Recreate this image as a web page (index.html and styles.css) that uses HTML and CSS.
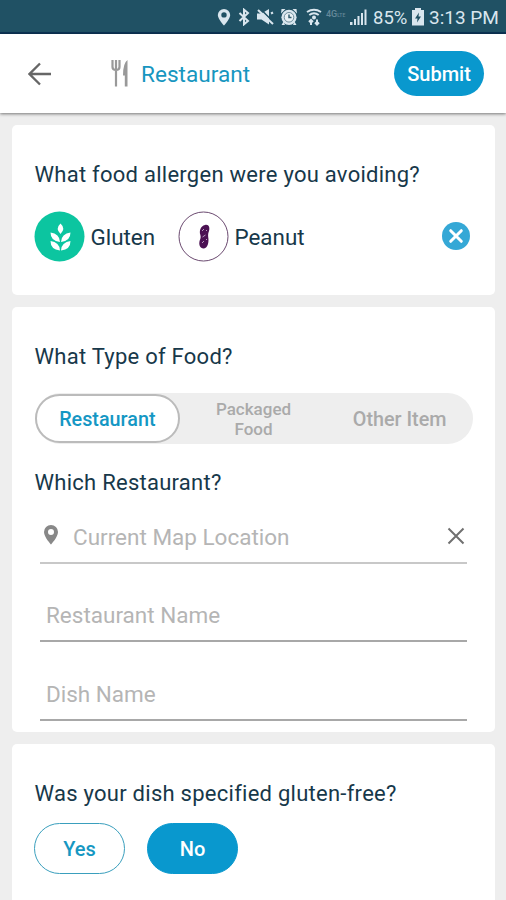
FILE: index.html
```
<!DOCTYPE html>
<html lang="en">
<head>
	<meta charset="utf-8">
	<meta name="viewport" content="width=device-width, initial-scale=1">
	<title>Restaurant</title>
	<link rel="stylesheet" href="styles.css">
</head>

<body>
	<div class="status-bar">
		<svg class="status-pin" width="14" height="18" viewBox="0 0 14 18"><path fill-rule="evenodd" d="M7 1a6.200 6.200 0 0 0-6.200 6c0 4 6.200 10.500 6.200 10.500S13.200 11 13.200 7A6.200 6.200 0 0 0 7 1zm0 3.200a2.700 2.700 0 1 1 0 5.400 2.700 2.700 0 0 1 0-5.400z"/></svg>
		<svg class="status-bluetooth" width="12" height="18" viewBox="0 0 12 18"><path class="line" d="M1.500 5l8.500 8L6 16.300V1.700L10 5l-8.500 8"/></svg>
		<svg class="status-mute" width="17" height="18" viewBox="0 0 17 18"><path d="M0 5.500h4.500L12 1v15.500l-7.500-5H0z"/><path class="cut" d="M3 .5l14 14"/><path class="line" d="M1 2l15 14"/><path class="line" d="M14 5.500l2-1"/></svg>
		<svg class="status-alarm" width="18" height="18" viewBox="0 0 18 18"><path d="M1.500 1h4L1 5.500zM16.500 1h-4L17 5.500zM3.500 13.500l-2 3.500H5zM14.500 13.500l2 3.500H13z"/><circle cx="9" cy="9.300" r="7.600"/><circle class="dial" cx="9" cy="9.300" r="4.800"/><path class="thin" d="M9 6.500v3h2.500"/></svg>
		<svg class="status-wifi" width="16" height="18" viewBox="0 0 16 18"><path class="line" d="M1 4q7-4.500 14 0M3.300 7q4.700-3.500 9.400 0"/><circle cx="8" cy="9.500" r="2"/><path class="line" d="M5 17v-5M3 14l2-2 2 2M11 11.500v5M9 14.500l2 2 2-2"/></svg>
		<span class="network">4G<small>LTE</small></span>
		<svg class="status-signal" width="17" height="18" viewBox="0 0 17 18"><path d="M0 14h2.500v3H0zM4 11h2v6H4zM7.500 8h2v9h-2zM11 5h2v12h-2zM14.500 1.500h2V17h-2z"/></svg>
		<span class="percent">85%</span>
		<svg class="status-battery" width="12" height="18" viewBox="0 0 12 18"><path d="M3 0h6v2h3v15.500H0V2h3z"/><path class="bolt" d="M7 4.500L3 10.500h2.500L5 14.500l4-6H6.500z"/></svg>
		<span class="time">3:13 PM</span>
	</div>

	<header class="header">
		<svg class="back" width="24" height="24" viewBox="0 0 24 24"><path d="M23 12H2M12 1.500L1.500 12 12 22.500"/></svg>
		<svg class="cutlery" width="18" height="27" viewBox="0 0 18 27"><path class="fork" d="M1.500 0v7q0 3 3.500 3t3.500-3V0M5 0v26.500"/><path class="knife" d="M16.500 0v26.500h-2.700V15.500H12Q12 3 16.500 0z"/></svg>
		<h1 class="title">Restaurant</h1>
		<button type="button" class="submit">Submit</button>
	</header>

	<main class="content">
		<section class="card allergen-card">
			<h2 class="question">What food allergen were you avoiding?</h2>
			<div class="allergens">
				<svg width="51" height="51" viewBox="0 0 51 51"><circle class="gluten-bg" cx="25.500" cy="25.500" r="25"/><g class="wheat"><path d="M26.500 12.500q5.500 5 0 10.500-5.500-5.500 0-10.500zM16.500 21.500q9 1 9.500 9.500-9.500-1-9.500-9.500zM36.500 21.500Q27.500 22.500 27 31q9.500-1 9.500-9.500zM16.500 30q9 1 9.500 9.500-9.500-1-9.500-9.500zM36.500 30q-9 1-9.500 9.500 9.500-1 9.500-9.500z"/></g></svg>
				<span class="allergen">Gluten</span>
				<svg width="51" height="51" viewBox="0 0 51 51"><circle class="peanut-bg" cx="25.500" cy="25.500" r="24.500"/><path class="peanut" d="M27 14c4-1 5 3 4 6-.8 2.500-1 3-.8 6 1 5-.5 11-4.200 11.500-4 .3-5.500-4-4.300-8 1-2.500 1.200-3 .7-5.500C21 20 22.500 15 27 14z"/><path class="peanut-line" d="M24 20l2-2M24.500 26l3-2M24 32l2-2M28 19l1 1M28 29l1-1"/></svg>
				<span class="allergen">Peanut</span>
				<svg class="clear" width="28" height="28" viewBox="0 0 28 28"><circle cx="14" cy="14" r="14"/><path d="M8.700 8.700l10.600 10.600M19.300 8.700L8.700 19.300"/></svg>
			</div>
		</section>

		<section class="card food-card">
			<h2 class="question">What Type of Food?</h2>
			<div class="tabs">
				<div class="tab active">Restaurant</div>
				<div class="tab small">Packaged<br>Food</div>
				<div class="tab">Other Item</div>
			</div>
			<h2 class="question q-which">Which Restaurant?</h2>
			<div class="field location">
				<svg class="pin" width="14" height="20" viewBox="0 0 14 20"><path fill-rule="evenodd" d="M7 0a7 7 0 0 0-7 7c0 5 7 12.500 7 12.500S14 12 14 7a7 7 0 0 0-7-7zm0 4a3 3 0 1 1 0 6 3 3 0 0 1 0-6z"/></svg>
				<span class="hint map-hint">Current Map Location</span>
				<svg class="remove" width="18" height="18" viewBox="0 0 18 18"><path d="M1.500 1.500l15 15M16.500 1.500l-15 15"/></svg>
			</div>
			<div class="field name"><span class="hint">Restaurant Name</span></div>
			<div class="field"><span class="hint">Dish Name</span></div>
		</section>

		<section class="card dish-card">
			<h2 class="question">Was your dish specified gluten-free?</h2>
			<div class="answers">
				<button type="button" class="answer">Yes</button>
				<button type="button" class="answer selected">No</button>
			</div>
		</section>
	</main>
</body>
</html>
```
FILE: styles.css
```
* {
	box-sizing: border-box;
}

body {
	margin: 0;
	height: 900px;
	overflow: hidden;
	background: #eee;
	font-family: Roboto, sans-serif;
	color: #17384a;
}

h1, h2 {
	margin: 0;
	font-weight: 400;
	white-space: nowrap;
}

svg {
	display: block;
	flex: none;
}

button {
	padding: 0;
	border: 0;
	font-family: inherit;
}

/* status bar */
.status-bar {
	display: flex;
	align-items: center;
	height: 34px;
	padding: 2px 0 0 217px;
	background: #205164;
	border-bottom: 2px solid #0d3354;
	color: #d9e6ee;
	fill: #d9e6ee;
	white-space: nowrap;
}
.status-bar .line {
	fill: none;
	stroke: #d9e6ee;
	stroke-width: 2;
}
.status-bar .cut {
	stroke: #205164;
	stroke-width: 1.5;
}
.status-bar .dial {
	fill: #e8f0f4;
	stroke: #6d8d9b;
	stroke-width: 1;
}
.status-bar .thin {
	fill: none;
	stroke: #315c6d;
	stroke-width: 1.5;
}
.status-bar .bolt {
	fill: #205164;
}
.status-bluetooth { margin-left: 7px; }
.status-mute { margin-left: 7px; }
.status-alarm { margin-left: 6px; }
.status-wifi { margin-left: 8px; }
.network {
	width: 20px;
	margin: 0 0 7px 4px;
	font-size: 9px;
	font-weight: 500;
	color: #66899a;
}
.network small {
	font-size: 5px;
}
.status-signal { margin-left: 4px; }
.percent {
	width: 34px;
	margin-left: 6px;
	padding-top: 1px;
	font-size: 18.5px;
}
.status-battery { margin-left: 5px; }
.time {
	margin-left: 5px;
	padding-top: 1px;
	font-size: 19px;
}

/* header */
.header {
	position: relative;
	display: flex;
	align-items: center;
	height: 79px;
	padding: 0 22px 0 28px;
	background: #fff;
	box-shadow: 0 1px 3px rgba(0, 0, 0, 0.5);
}
.back {
	fill: none;
	stroke: #666;
	stroke-width: 2.3;
}
.cutlery {
	margin-left: 59px;
}
.fork {
	fill: none;
	stroke: #999;
	stroke-width: 2.2;
}
.knife {
	fill: #999;
}
.title {
	margin-left: 12px;
	padding-top: 1px;
	font-size: 22.6px;
	color: #1796c0;
}
.submit {
	width: 90px;
	height: 45px;
	margin-left: auto;
	border-radius: 23px;
	background: #0998ce;
	color: #fff;
	font-size: 20px;
	font-weight: 500;
}

/* cards */
.content {
	display: flex;
	flex-direction: column;
	gap: 12px;
	padding: 12px 11px 0 12px;
}
.card {
	padding: 37px 22px 0;
	border-radius: 5px;
	background: #fff;
}
.question {
	padding-left: 0.5px;
	font-size: 22px;
	line-height: 26px;
	letter-spacing: 0.26px;
}
.allergen-card {
	height: 170px;
}
.allergens {
	display: flex;
	align-items: center;
	margin-top: 23px;
}
.gluten-bg {
	fill: #0cc5a0;
}
.wheat {
	fill: #fff;
}
.peanut-bg {
	fill: #fff;
	stroke: #6b4a70;
	stroke-width: 1;
}
.peanut {
	fill: #4b1153;
}
.peanut-line {
	stroke: #b79bc0;
	stroke-width: 1;
}
.allergen {
	width: 93px;
	padding-left: 5.5px;
	font-size: 22.4px;
}
.clear {
	margin: -1px 3px 0 auto;
	fill: #35a8d6;
}
.clear path {
	stroke: #fff;
	stroke-width: 3;
	stroke-linecap: round;
}

.food-card {
	height: 425px;
}
.tabs {
	display: flex;
	height: 51px;
	margin: 23px 0 0 1px;
	border-radius: 26px;
	background: #eee;
}
.tab {
	display: flex;
	align-items: center;
	justify-content: center;
	width: 147px;
	padding-top: 1px;
	color: #aaa;
	font-size: 19.8px;
	font-weight: 500;
	text-align: center;
}
.tab.active {
	width: 145px;
	height: 49px;
	margin-top: 1px;
	padding-top: 2px;
	border: 2px solid #bbb;
	border-radius: 25px;
	background: #fff;
	color: #1597c4;
}
.tab.small {
	padding-left: 1px;
	font-size: 17px;
	line-height: 20px;
}
.q-which {
	margin-top: 26px;
}
.field {
	display: flex;
	align-items: center;
	height: 79px;
	margin: 0 6px;
	padding: 26px 0 0 6px;
	border-bottom: 2px solid #a8a8a8;
}
.field.name {
	height: 78px;
}
.location {
	height: 68px;
	padding: 15px 2px 0 4px;
	border-color: #c8c8c8;
}
.hint {
	color: #b5b5b5;
	font-size: 22.5px;
	white-space: nowrap;
}
.pin {
	margin-top: -3px;
	fill: #888;
}
.map-hint {
	margin-left: 15px;
}
.remove {
	margin: -1px 0 0 auto;
	stroke: #707070;
	stroke-width: 2;
}

.dish-card {
	height: 170px;
}
.answers {
	display: flex;
	gap: 22px;
	margin-top: 16px;
}
.answer {
	width: 91px;
	height: 51px;
	border: 1.5px solid #3a9fbd;
	border-radius: 26px;
	background: #fff;
	color: #1697c2;
	font-size: 20px;
	font-weight: 500;
}
.answer.selected {
	border-color: #0998ce;
	background: #0998ce;
	color: #fff;
}
```
